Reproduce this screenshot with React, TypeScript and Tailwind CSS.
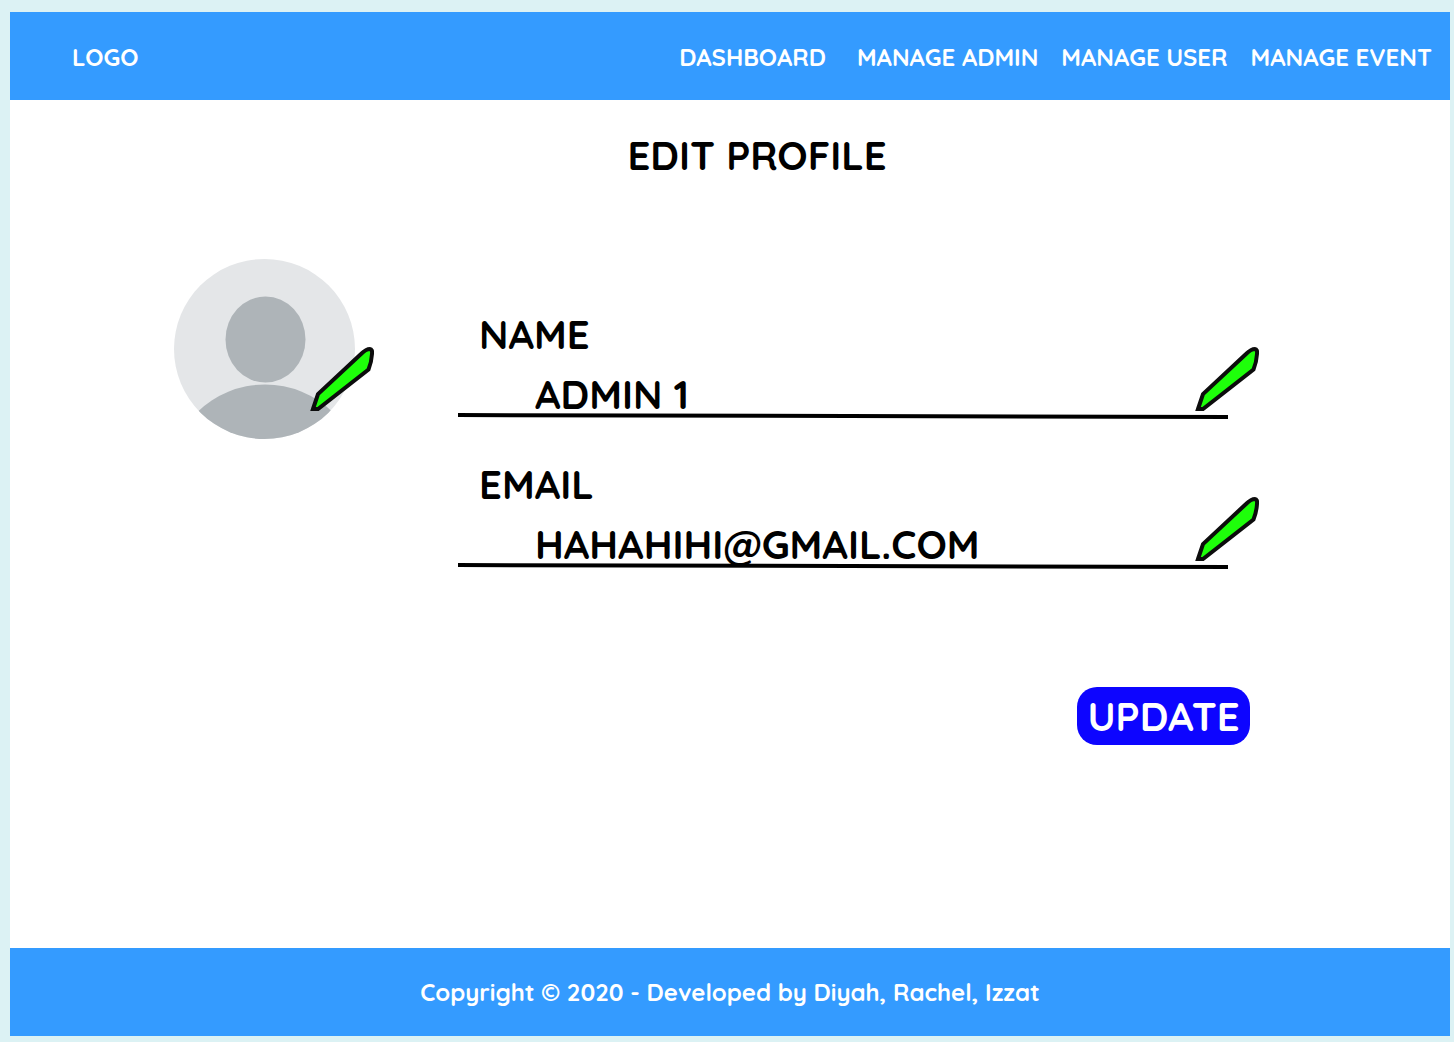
import { useState } from "react";

function Pencil() {
  return (
    <svg className="block size-16" viewBox="0 0 64 64" aria-hidden="true">
      <path
        d="M3 62 L8 47 L51 7 Q56 2 60 2 Q62.500 2 62 7 Q61.500 15 58.500 22.500 L8 62 Z"
        fill="#1eff0a"
        stroke="#0c0c0c"
        strokeWidth="4"
      />
    </svg>
  );
}

function Avatar() {
  return (
    <svg className="block h-[180px] w-[181px]" viewBox="0 0 181 180" role="img" aria-label="Profile picture">
      <defs>
        <clipPath id="avatar-circle">
          <ellipse cx="90.500" cy="90" rx="90.500" ry="90" />
        </clipPath>
      </defs>
      <g clipPath="url(#avatar-circle)">
        <rect width="181" height="180" fill="#e4e6e8" />
        <ellipse cx="91.500" cy="80.500" rx="40" ry="43" fill="#aeb4b8" />
        <ellipse cx="91" cy="220" rx="96" ry="94.500" fill="#aeb4b8" />
      </g>
    </svg>
  );
}

type FieldProps = {
  id: string;
  label: string;
  type: string;
  value: string;
  onChange: (value: string) => void;
};

function Field({ id, label, type, value, onChange }: FieldProps) {
  return (
    <div className="flex flex-col gap-3">
      <label htmlFor={id} className="pl-[21px] text-[40px] leading-[48px]">
        {label}
      </label>
      <div className="relative pb-px">
        <input
          id={id}
          type={type}
          value={value}
          onChange={(e) => onChange(e.target.value)}
          className="block h-12 w-full bg-transparent pr-20 pl-[77px] text-[40px] leading-[48px] outline-none"
        />
        <div className="pointer-events-none absolute inset-x-0 bottom-0 pr-[31px]">
          <svg className="block h-1.5 w-full" viewBox="0 0 770 6" preserveAspectRatio="none" aria-hidden="true">
            <path d="M0 2 L770 4" stroke="black" strokeWidth="4" />
          </svg>
        </div>
        <button type="button" aria-label={"Edit " + label.toLowerCase()} className="absolute right-0 bottom-2">
          <Pencil />
        </button>
      </div>
    </div>
  );
}

export default function App() {
  const [name, setName] = useState("ADMIN 1");
  const [email, setEmail] = useState("HAHAHIHI@GMAIL.COM");

  return (
    <div className="flex min-h-screen flex-col bg-[#dcf2f4] pt-3 pr-1 pb-1.5 pl-2.5 font-['Quicksand','Lato',sans-serif] font-bold text-black">
      <header className="flex h-[88px] items-center justify-between bg-[#349bff] pt-0.5 pr-[18px] pl-[62px] text-2xl text-white">
        <a href="#">LOGO</a>
        <nav className="flex gap-[23px] whitespace-nowrap">
          <a href="#dashboard" className="mr-2">DASHBOARD</a>
          <a href="#admin">MANAGE ADMIN</a>
          <a href="#user">MANAGE USER</a>
          <a href="#event">MANAGE EVENT</a>
        </nav>
      </header>

      <main className="flex-1 bg-white pt-[31px]">
        <h1 className="pl-[54px] text-center text-[40px] leading-[48px]">EDIT PROFILE</h1>
        <div className="flex items-start gap-[103px] pt-20 pr-[191px] pl-[164px]">
          <div className="relative shrink-0">
            <Avatar />
            <button type="button" aria-label="Edit profile picture" className="absolute -right-[19px] bottom-7">
              <Pencil />
            </button>
          </div>
          <form
            className="flex min-w-0 flex-1 flex-col gap-[41px] pt-[51px]"
            onSubmit={(e) => e.preventDefault()}
          >
            <Field id="name" label="NAME" type="text" value={name} onChange={setName} />
            <Field id="email" label="EMAIL" type="email" value={email} onChange={setEmail} />
            <button
              type="submit"
              className="mt-[77px] mr-[9px] flex h-[58px] w-[173px] items-center justify-center self-end rounded-[20px] bg-[#0d05ff] text-[40px] leading-[48px] text-white"
            >
              UPDATE
            </button>
          </form>
        </div>
      </main>

      <footer className="flex h-[88px] items-center justify-center bg-[#349bff] text-2xl text-white">
        <p>Copyright © 2020 - Developed by Diyah, Rachel, Izzat</p>
      </footer>
    </div>
  );
}
